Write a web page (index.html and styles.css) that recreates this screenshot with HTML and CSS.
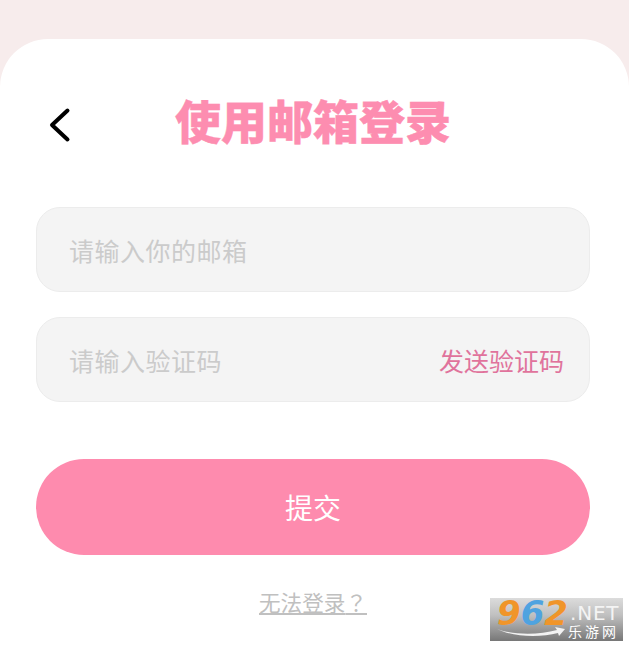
FILE: index.html
```html
<!DOCTYPE html>
<html>
<head>
    <meta charset="UTF-8">
    <title>使用邮箱登录</title>
    <link rel="stylesheet" href="styles.css">
</head>
<body>
    <div class="card">
        <div class="header">
            <svg class="back-icon" width="24" height="36" viewBox="0 0 24 36">
                <path d="M19.500 3.500 L4 18 L19.500 32.500" fill="none" stroke="#000" stroke-width="4" stroke-linecap="round" stroke-linejoin="round"/>
            </svg>
            <h1 class="title">使用邮箱登录</h1>
        </div>

        <div class="field">
            <span class="placeholder">请输入你的邮箱</span>
        </div>
        <div class="field">
            <span class="placeholder">请输入验证码</span>
            <span class="send-code">发送验证码</span>
        </div>

        <button class="submit">提交</button>
        <a class="help-link">无法登录<span class="help-mark">？</span></a>
    </div>

    <div class="watermark">
        <div class="wm-left">
            <div class="wm-num"><span class="wm-orange">9</span><span class="wm-blue">6</span><span class="wm-orange">2</span></div>
            <svg class="wm-swoosh" width="68" height="11" viewBox="0 0 68 11">
                <path d="M0 2 C16 8 42 8 60 3 L58 0 L68 2 L62 9 L61 6 C42 11 16 10 0 2 Z" fill="#f2f2f2"/>
            </svg>
        </div>
        <div class="wm-right">
            <div class="wm-net">.NET</div>
            <div class="wm-cn">乐游网</div>
        </div>
    </div>
</body>
</html>
```

FILE: styles.css
```css
* {
    box-sizing: border-box;
    margin: 0;
    padding: 0;
}

html, body {
    height: 100%;
    overflow: hidden;
}

body {
    background: #f7ecec;
    padding-top: 39px;
    font-family: "Noto Sans CJK SC", "Noto Sans", sans-serif;
}

.card {
    height: 608px;
    background: #fff;
    border-radius: 48px 48px 0 0;
    padding: 0 39px 0 36px;
    display: flex;
    flex-direction: column;
}

.header {
    display: flex;
    align-items: center;
    height: 168px;
    padding-left: 12px;
}

.back-icon {
    margin-top: 3px;
}

.title {
    flex: 1;
    text-align: center;
    margin-left: -36px;
    padding-bottom: 8px;
    font-size: 46px;
    font-weight: 900;
    line-height: 1;
    color: #fd8db0;
    -webkit-text-stroke: 0.4px #fd8db0;
}

.field {
    height: 85px;
    background: #f4f4f4;
    border: 1px solid #ececec;
    border-radius: 24px;
    padding: 0 25px 0 32px;
    display: flex;
    align-items: center;
    justify-content: space-between;
    font-size: 25px;
    margin-bottom: 25px;
}

.placeholder {
    color: #cbcbcb;
    letter-spacing: 0.5px;
}

.send-code {
    color: #e0739c;
}

.submit {
    height: 96px;
    margin-top: 32px;
    border: none;
    border-radius: 48px;
    background: #fe8bae;
    color: #fff;
    font-family: inherit;
    font-size: 28px;
}

.help-link {
    align-self: center;
    margin-top: 30px;
    font-size: 21.6px;
    line-height: 34px;
    color: #c0c0c0;
    text-decoration: underline;
}

.help-mark {
    font-family: "Noto Sans CJK TC", sans-serif;
}

.watermark {
    position: absolute;
    left: 490px;
    top: 598px;
    width: 133px;
    height: 43px;
    background: linear-gradient(#dcdcdc, #c0c0c0 40%, #777);
    padding: 1px 0 0 7px;
    display: flex;
}

.wm-left {
    width: 73px;
}

.wm-num {
    height: 29px;
    font-family: "DejaVu Sans", sans-serif;
    font-size: 34px;
    line-height: 29px;
    font-weight: 700;
    font-style: italic;
}

.wm-orange { color: #f0952a; }
.wm-blue { color: #4fa3e0; }

.wm-swoosh {
    display: block;
    margin-top: -1px;
}

.wm-right {
    display: flex;
    flex-direction: column;
    align-items: flex-start;
}

.wm-net {
    margin-top: 4px;
    font-family: "DejaVu Sans", sans-serif;
    font-size: 20px;
    line-height: 20px;
    letter-spacing: 0.8px;
    color: #f4f4f4;
}

.wm-cn {
    margin-left: -2px;
    font-size: 14px;
    line-height: 16px;
    letter-spacing: 3px;
    color: #fff;
}
```
